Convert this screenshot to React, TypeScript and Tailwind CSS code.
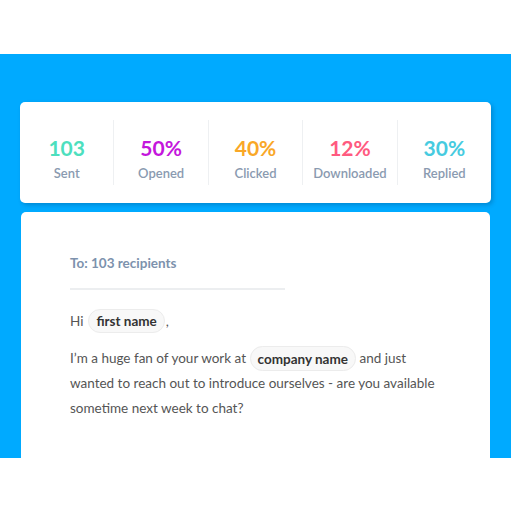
const stats = [
  { value: '103', label: 'Sent', color: 'text-[#4ddfbe]' },
  { value: '50%', label: 'Opened', color: 'text-[#c416dc]' },
  { value: '40%', label: 'Clicked', color: 'text-[#f9a727]' },
  { value: '12%', label: 'Downloaded', color: 'text-[#ff5a7f]' },
  { value: '30%', label: 'Replied', color: 'text-[#46cbe0]' },
];

function Chip({ children }: { children: React.ReactNode }) {
  return (
    <span className="rounded-full border border-[#ececec] bg-[#f8f8f8] px-[7px] py-[3.5px] font-bold text-[#333]">
      {children}
    </span>
  );
}

export default function App() {
  return (
    <div className="h-[512px] w-[512px] bg-white pt-[54px] font-['Lato',sans-serif]">
      <div className="flex h-[404px] w-[511px] flex-col bg-[#00aaff] px-[20px] pt-[48px]">
        {/* Stats */}
        <div className="flex h-[101px] rounded-[5px] bg-white py-[18px] shadow-[2px_2px_4px_rgba(0,40,80,0.25)]">
          {stats.map((s, i) => (
            <div
              key={s.label}
              className={`flex flex-1 flex-col items-center pt-[16px] ${i > 0 ? 'border-l border-[#eef0f2]' : ''}`}
            >
              <div className={`text-[21px] leading-[24px] font-bold ${s.color}`}>{s.value}</div>
              <div className="mt-[5px] text-[13px] leading-[16px] font-semibold text-[#8a9ab0]">{s.label}</div>
            </div>
          ))}
        </div>

        {/* Email */}
        <div className="mt-[9px] ml-[1px] mr-[1px] flex-1 rounded-t-[5px] bg-white pl-[49px] pt-[43px]">
          <div className="text-[13.5px] leading-[16px] font-bold text-[#7d92ad]">To: 103 recipients</div>
          <div className="mt-[17px] h-[2px] w-[215px] bg-[#eceef0]" />
          <div className="mt-[19px] flex h-[24px] items-center text-[13.5px] text-[#555]">
            <span className="mr-[5px]">Hi</span>
            <span className="flex h-[24px] items-center rounded-full border border-[#ececec] bg-[#f8f8f8] px-[7px] font-bold text-[#333]">
              first name
            </span>
            <span className="ml-[1px]">,</span>
          </div>
          <p className="mt-[13px] w-[380px] text-[13.5px] leading-[25px] text-[#555]">
            I’m a huge fan of your work at <Chip>company name</Chip> and just
            <br />
            wanted to reach out to introduce ourselves - are you available
            <br />
            sometime next week to chat?
          </p>
        </div>
      </div>
    </div>
  );
}
